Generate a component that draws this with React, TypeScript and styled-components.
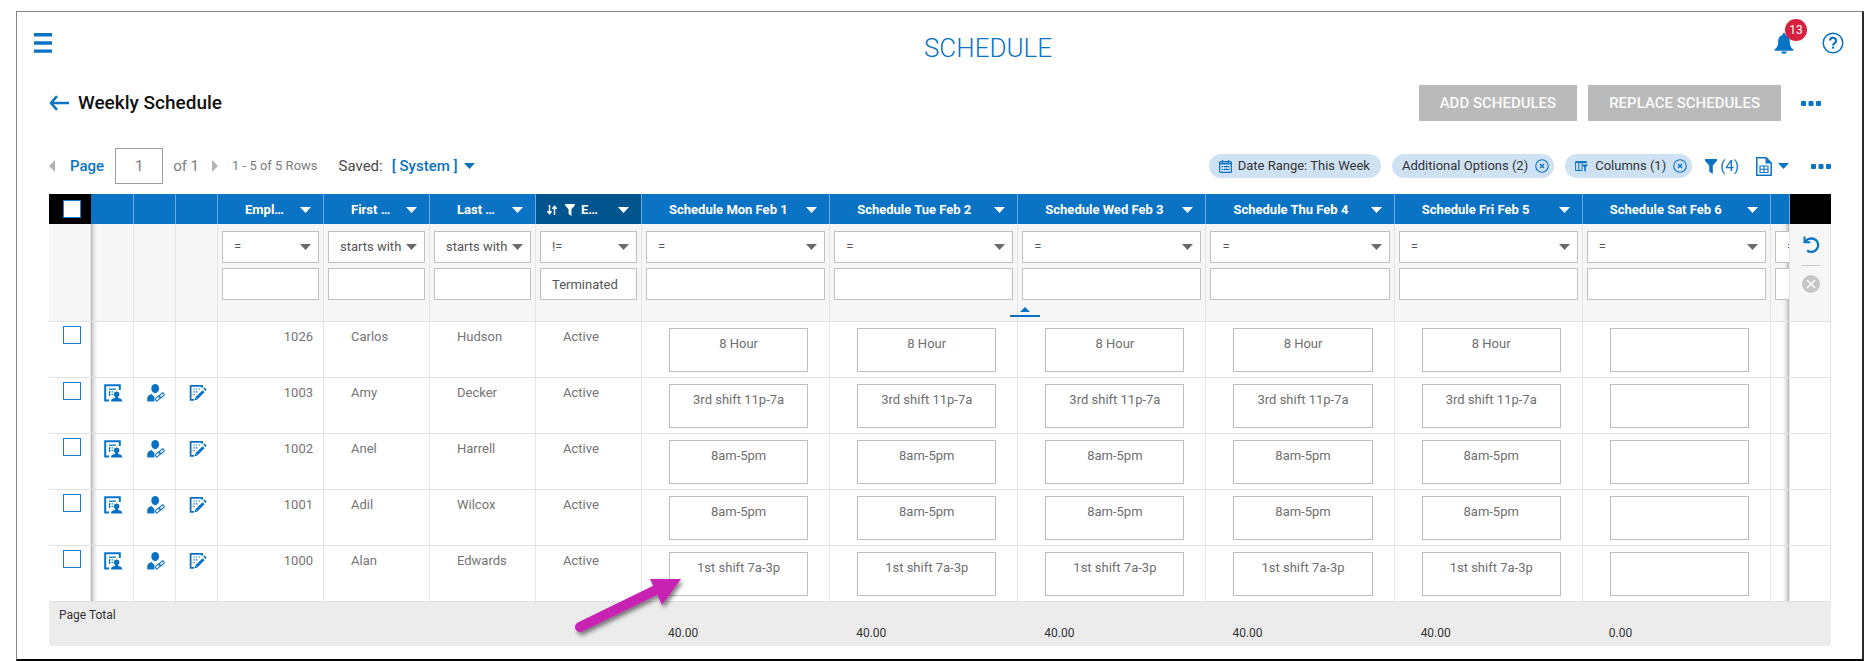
import React from "react";
import styled, { createGlobalStyle, css } from "styled-components";

const BLUE = "#0a73c4";

const GlobalStyle = createGlobalStyle`
  *, *::before, *::after { box-sizing: border-box; }
  body {
    margin: 0;
    background: #fff;
    color: #333;
    font-family: Roboto, "Liberation Sans", sans-serif;
    font-size: 13px;
    line-height: 16px;
  }
  button, input, select { font: inherit; color: inherit; }
  svg { display: block; flex: none; }
`;

const Frame = styled.div`
  margin: 11px 0 0 16px;
  min-height: calc(100vh - 11px);
  border-style: solid;
  border-width: 1px 2px 2px 1px;
  border-color: #868686 #2b2b2b #000 #868686;
`;

const IconButton = styled.button`
  display: flex;
  align-items: center;
  padding: 0;
  border: 0;
  background: none;
  color: ${BLUE};
  cursor: pointer;
`;

/* ---------- top bar ---------- */

const TopBar = styled.header`
  display: grid;
  grid-template-columns: auto 1fr auto;
  align-items: center;
  height: 62px;
  padding: 0 18px 0 17px;
`;

const AppTitle = styled.h1`
  margin: 0;
  padding: 10px 0 0 150px;
  color: ${BLUE};
  font-size: 26px;
  line-height: 32px;
  font-weight: 300;
  text-align: center;
`;

const TopActions = styled.div`
  display: flex;
  align-items: center;
  gap: 28px;
`;

const BellButton = styled(IconButton)`
  position: relative;
`;

const Badge = styled.span`
  position: absolute;
  left: 11px;
  top: -14px;
  width: 22px;
  height: 22px;
  border-radius: 50%;
  background: #d5213f;
  color: #fff;
  font-size: 12px;
  line-height: 22px;
  text-align: center;
`;

/* ---------- page heading ---------- */

const Content = styled.main`
  padding: 11px 31px 13px 32px;
`;

const HeadingRow = styled.div`
  display: flex;
  align-items: center;
  height: 36px;
  padding-right: 10px;
`;

const Heading = styled.h2`
  flex: 1;
  margin: 0 0 0 9px;
  color: #111;
  font-size: 19px;
  line-height: 24px;
  font-weight: 500;
`;

const ActionButton = styled.button`
  height: 36px;
  margin-right: 11px;
  padding: 0 21px;
  border: 0;
  background: #bababa;
  color: #fafafa;
  font-size: 15px;
  font-weight: 500;
  white-space: nowrap;
`;

const HeadingMore = styled(IconButton)`
  margin-left: 9px;
`;

/* ---------- toolbar ---------- */

const Toolbar = styled.div`
  display: flex;
  align-items: center;
  justify-content: space-between;
  height: 36px;
  margin: 27px 0 10px;
`;

const Pager = styled.div`
  display: flex;
  align-items: center;
  color: #7d7d7d;
  font-size: 15px;
  white-space: nowrap;
`;

const PageLabel = styled.label`
  margin: 0 11px 0 14px;
  color: ${BLUE};
  font-weight: 500;
`;

const PageInput = styled.input`
  width: 48px;
  height: 36px;
  margin-right: 10px;
  padding: 0;
  border: 1px solid #9b9b9b;
  background: #fff;
  text-align: center;
`;

const NextPage = styled(IconButton)`
  margin: 0 14px 0 12px;
`;

const RowCount = styled.span`
  font-size: 13px;
`;

const SavedLabel = styled.span`
  margin: 0 9px 0 21px;
  color: #4a4a4a;
`;

const SavedButton = styled(IconButton)`
  gap: 6px;
  font-weight: 500;
`;

const Tools = styled.div`
  display: flex;
  align-items: center;
  gap: 11px;
  white-space: nowrap;
`;

const Chip = styled.button<{ $closable?: boolean }>`
  display: flex;
  align-items: center;
  gap: ${(p) => (p.$closable ? 7 : 6)}px;
  height: 24px;
  padding: 0 ${(p) => (p.$closable ? 5 : 11)}px 0 10px;
  border: 0;
  border-radius: 12px;
  background: #cfe2f3;
  color: #333;

  svg { color: ${BLUE}; }
`;

const FilterCount = styled(IconButton)`
  gap: 3px;
  margin-left: 2px;
  font-size: 15px;
`;

const ExportButton = styled(IconButton)`
  gap: 6px;
  margin: 0 11px 0 6px;
`;

/* ---------- grid ---------- */

const GridWrap = styled.div`
  position: relative;
`;

const Grid = styled.table`
  width: 100%;
  table-layout: fixed;
  border-collapse: separate;
  border-spacing: 0;

  td, th { padding: 0; }
`;

const Col = styled.col<{ $w?: number }>`
  ${(p) => p.$w && css`width: ${p.$w}px;`}
`;

const HeadCell = styled.th<{ $tone?: "black" | "active" }>`
  height: 30px;
  overflow: hidden;
  border-right: 1px solid ${(p) => (p.$tone === "black" ? "#000" : "#6aabdf")};
  background: ${(p) =>
    p.$tone === "black" ? "#000" : p.$tone === "active" ? "#00558f" : BLUE};
  color: #fff;
  font-weight: 700;
  text-align: left;
`;

const HeadInner = styled.div<{ $icons?: boolean }>`
  display: flex;
  align-items: center;
  padding: 1px 12px 0 ${(p) => (p.$icons ? 11 : 27)}px;
`;

const HeadText = styled.span`
  flex: 1;
  white-space: nowrap;
`;

const HeadIcons = styled.span`
  display: flex;
  align-items: center;
  gap: 8px;
  margin-right: 6px;
`;

const shadowRight = css`
  background-image: linear-gradient(to right, #b4b4b4, #d9d9d9 2px, #efefef 4px, transparent 7px);
`;
const shadowLeft = css`
  background-image: linear-gradient(to left, #b4b4b4, #d9d9d9 2px, #efefef 4px, transparent 7px);
`;

const Cell = styled.td<{ $shade?: "left" | "right"; $align?: "center" | "right" }>`
  position: relative;
  height: 56px;
  border-right: 1px solid #e3e5e6;
  border-bottom: 1px solid #dfe2e4;
  background-color: #fff;
  color: #757575;
  vertical-align: top;
  text-align: ${(p) => p.$align ?? "left"};
  ${(p) => p.$shade === "right" && shadowRight}
  ${(p) => p.$shade === "left" && shadowLeft}
`;

const FilterCell = styled(Cell)`
  height: 98px;
  overflow: hidden;
  background-color: #f6f6f6;
`;

const TextCell = styled(Cell)`
  && { padding: 7px 10px 0 ${(p) => (p.$align === "right" ? 0 : 27)}px; }
`;

const FilterStack = styled.div`
  display: flex;
  flex-direction: column;
  gap: 5px;
  min-width: 97px;
  padding: 7px 4px 0 4px;
`;

const SelectWrap = styled.div<{ $fixed?: boolean }>`
  display: grid;
  align-items: center;
  width: ${(p) => (p.$fixed ? "180px" : "100%")};

  > * { grid-area: 1 / 1; }
  > svg {
    justify-self: end;
    margin-right: 8px;
    color: #6b6b6b;
    pointer-events: none;
  }
`;

const fieldStyle = css`
  width: 100%;
  height: 32px;
  border: 1px solid #c0c0c0;
  border-radius: 0;
  background: #fff;
  color: #555;
  outline: none;
`;

const OperatorSelect = styled.select`
  ${fieldStyle}
  appearance: none;
  padding: 0 11px;
`;

const FilterInput = styled.input`
  ${fieldStyle}
  padding: 0 11px;
`;

const Check = styled.input`
  appearance: none;
  display: block;
  width: 18px;
  height: 18px;
  margin: 0 0 0 14px;
  border: 1px solid #1b7ecb;
  background: #fff;
`;

const CheckCell = styled(Cell)`
  && { padding-top: 4px; }
`;

const RowAction = styled(IconButton)`
  margin: 6px 0 0 13px;
`;

const ShiftInput = styled.input`
  display: block;
  width: calc(100% - 48px);
  height: 44px;
  margin: 6px 0 0 27px;
  padding: 0 0 13px;
  border: 1px solid #bdbdbd;
  background: #fff;
  color: #6f6f6f;
  text-align: center;
`;

const ToolStack = styled.div`
  display: flex;
  flex-direction: column;
  align-items: center;
  padding: 12px 0 0 2px;
`;

const Rule = styled.span`
  width: 18px;
  height: 1px;
  margin: 11px 0 9px;
  background: #c8c8c8;
`;

const FootCell = styled.td<{ $total?: boolean }>`
  height: 44px;
  background: #ececec;
  color: #333;
  font-size: 12px;
  vertical-align: top;
  && { padding: ${(p) => (p.$total ? "23px 0 0 26px" : "5px 0 0 10px")}; }
`;

const CollapseHandle = styled(IconButton)`
  position: absolute;
  top: 113px;
  left: 169px;
  right: 0;
  width: 30px;
  margin: 0 auto;
  flex-direction: column;
  gap: 3px;

  &::after {
    content: "";
    width: 30px;
    height: 2px;
    background: ${BLUE};
  }
`;

const Pointer = styled.svg`
  position: absolute;
  left: -72px;
  top: 24px;
  z-index: 2;
  pointer-events: none;
`;

/* ---------- icons ---------- */

const Caret = ({ w = 11, h = 6 }: { w?: number; h?: number }) => (
  <svg width={w} height={h} viewBox="0 0 10 5" preserveAspectRatio="none" aria-hidden="true">
    <path d="M0 0h10L5 5z" fill="currentColor" />
  </svg>
);

const SideCaret = ({ dir }: { dir: "left" | "right" }) => (
  <svg width="7" height="12" viewBox="0 0 7 12" aria-hidden="true">
    <path d={dir === "left" ? "M6 0v12L0 6z" : "M1 0v12l6-6z"} fill="#b3b3b3" />
  </svg>
);

const Dots = () => (
  <svg width="20" height="5" viewBox="0 0 20 5" fill="currentColor" aria-hidden="true">
    <rect width="5" height="5" rx="1" />
    <rect x="7.5" width="5" height="5" rx="1" />
    <rect x="15" width="5" height="5" rx="1" />
  </svg>
);

const Menu = () => (
  <svg width="18" height="20" viewBox="0 0 18 20" fill="currentColor" aria-hidden="true">
    <path d="M0 0h18v3.4H0zM0 8.300h18v3.400H0zM0 16.400h18v3.400H0z" />
  </svg>
);

const Bell = () => (
  <svg width="20" height="21" viewBox="0 0 20 21" fill="currentColor" aria-hidden="true">
    <path d="M10 0c.9 0 1.500.6 1.500 1.500v.6c2.800.8 4.300 3 4.300 6.200 0 4.500 1 6.200 3.200 7.800.7.500.7 1.700-.2 1.700H1.200c-.9 0-.9-1.200-.2-1.700 2.200-1.600 3.200-3.300 3.200-7.800 0-3.200 1.500-5.400 4.300-6.200v-.6C8.500.6 9.100 0 10 0z" />
    <path d="M7.200 18.600h5.600a2.800 2.200 0 0 1-5.600 0z" />
  </svg>
);

const Help = () => (
  <svg width="22" height="22" viewBox="0 0 22 22" fill="none" stroke="currentColor" aria-hidden="true">
    <circle cx="11" cy="11" r="9.800" strokeWidth="1.500" />
    <path d="M8 8.600a3 3 0 1 1 4.600 2.500c-1 .7-1.500 1.100-1.500 2.300" strokeWidth="2.200" />
    <path d="M10 14.600h2.200v2H10z" fill="currentColor" stroke="none" />
  </svg>
);

const BackArrow = () => (
  <svg width="20" height="16" viewBox="0 0 20 16" fill="none" stroke="currentColor" strokeWidth="2.500" aria-hidden="true">
    <path d="M8 1.200 2 8l6 6.800M2 8h18" />
  </svg>
);

const Calendar = () => (
  <svg width="13" height="13" viewBox="0 0 13 13" fill="none" stroke="currentColor" aria-hidden="true">
    <rect x=".6" y="1.600" width="11.800" height="10.800" rx="1" strokeWidth="1.200" />
    <path d="M.6 3.600h11.800" strokeWidth="1.600" />
    <path d="M3.500 0v2.500M9.500 0v2.500M2.600 6.600h1.400M5 6.600h5.400M2.600 9.400h1.400M5 9.400h5.400" strokeWidth="1.200" />
  </svg>
);

const ColumnsIcon = () => (
  <svg width="13" height="13" viewBox="0 0 13 13" fill="none" stroke="currentColor" aria-hidden="true">
    <path d="M7 10.500H.6V1.600h10.800v1.600M.6 2.500h10.800M3.800 2v8.500M7 2v8.500" strokeWidth="1" />
    <path d="M6.800 4.500H13l-2.200 2.800V12l-1.600-1.200V7.300z" fill="currentColor" stroke="none" />
  </svg>
);

const CircleX = () => (
  <svg width="14" height="14" viewBox="0 0 15 15" fill="none" stroke="currentColor" aria-hidden="true">
    <circle cx="7.500" cy="7.500" r="6.700" strokeWidth="1.200" />
    <path d="m5.300 5.300 4.400 4.400M9.700 5.300 5.300 9.700" strokeWidth="1.500" />
  </svg>
);

const Funnel = ({ w = 12, h = 15 }: { w?: number; h?: number }) => (
  <svg width={w} height={h} viewBox="0 0 12 15" fill="currentColor" aria-hidden="true">
    <path d="M0 0h12v1.800L7.800 6.500V15L4.200 12.500v-6L0 1.800z" />
  </svg>
);

const SortArrows = () => (
  <svg width="10" height="10" viewBox="0 0 10 10" fill="none" stroke="currentColor" strokeWidth="1.500" aria-hidden="true">
    <path d="M2.500 0v8.500M.4 6.200l2.100 2.400 2.100-2.400M7.500 10V1.500M5.400 3.800l2.100-2.400 2.100 2.400" />
  </svg>
);

const SheetIcon = () => (
  <svg width="16" height="19" viewBox="0 0 16 19" fill="none" stroke="currentColor" aria-hidden="true">
    <path d="M.8.800h9.400l5 5.200v12.200H.8z" strokeWidth="1.500" />
    <path d="M9.500.5v6H15.500z" fill="currentColor" stroke="none" />
    <path d="M4 9h8v6.500H4zM4 12.200h8M8 9v6.500" strokeWidth="1.100" />
  </svg>
);

const Undo = () => (
  <svg width="17" height="18" viewBox="0 0 17 18" fill="none" stroke={BLUE} strokeWidth="2.200" aria-hidden="true">
    <path d="M2 5.500C4 3 6 2.300 8.700 2.300a6.800 6.800 0 1 1-4.500 12.200" />
    <path d="M1.500.5v5.800h5.800" strokeWidth="2" />
  </svg>
);

const ClearIcon = () => (
  <svg width="18" height="18" viewBox="0 0 18 18" fill="none" aria-hidden="true">
    <circle cx="9" cy="9" r="9" fill="#c6c6c6" />
    <path d="m5 5 8 8M13 5l-8 8" stroke="#fff" strokeWidth="1.500" />
  </svg>
);

const ProfileIcon = () => (
  <svg width="18" height="18" viewBox="0 0 18 18" fill="none" stroke="currentColor" aria-hidden="true">
    <path d="M5 16.600H1.200V1.200h14.600V6" strokeWidth="2" />
    <path d="M5 5.200h7" strokeWidth="1.300" />
    <path d="M5.600 7v5M7.500 7.800h1.600M7.500 10.500h1.600" strokeWidth="1.200" />
    <g fill="currentColor" stroke="none">
      <path d="M12.600 7.500c1.700 0 2.800 1.100 2.800 2.700 0 1.100-.5 2-1.200 2.600v1.100c2 .5 3.600.9 3.800 2.200v1.500H7.200v-1.500c.2-1.300 1.800-1.700 3.800-2.200v-1.100c-.7-.6-1.200-1.500-1.200-2.600 0-1.600 1.100-2.700 2.800-2.700z" />
    </g>
  </svg>
);

const PersonLink = () => (
  <svg width="18" height="18" viewBox="0 0 18 18" fill="none" aria-hidden="true">
    <ellipse cx="8.200" cy="4.600" rx="3.900" ry="4.600" fill="currentColor" />
    <path d="M.3 17.500v-3.300c0-2 1.500-3.400 4.200-4.200l3 3-.2 4.500z" fill="currentColor" />
    <g stroke="currentColor" strokeWidth="1.100">
      <rect x="8.100" y="13" width="5.600" height="2.800" rx="1.400" transform="rotate(-45 10.900 14.400)" />
      <rect x="11.900" y="10" width="5.600" height="2.800" rx="1.400" transform="rotate(-45 14.700 11.400)" />
    </g>
  </svg>
);

const EditSheet = () => (
  <svg width="18" height="18" viewBox="0 0 18 18" fill="none" stroke="currentColor" aria-hidden="true">
    <path d="M5 15.800H1.600V1.800h11.500v2" strokeWidth="1.800" />
    <path d="M4.300 5h1.400M7 5h1.400M9.700 5h1.400M4.300 7.800h1.400M7 7.800h1.400M4.300 10.500h1.400" strokeWidth="1.200" />
    <path d="m7.500 14.300 7-7" strokeWidth="3" />
    <path d="m15.500 3.500 2.300 2.300-1.300 1.300-2.300-2.300zM5.600 16.300l.6-3 2.400 2.400z" fill="currentColor" stroke="none" />
  </svg>
);

/* ---------- data ---------- */

const days = ["Mon Feb 1", "Tue Feb 2", "Wed Feb 3", "Thu Feb 4", "Fri Feb 5", "Sat Feb 6"];
const totals = ["40.00", "40.00", "40.00", "40.00", "40.00", "0.00"];

const employees = [
  { id: "1026", first: "Carlos", last: "Hudson", shift: "8 Hour", actions: false },
  { id: "1003", first: "Amy", last: "Decker", shift: "3rd shift 11p-7a", actions: true },
  { id: "1002", first: "Anel", last: "Harrell", shift: "8am-5pm", actions: true },
  { id: "1001", first: "Adil", last: "Wilcox", shift: "8am-5pm", actions: true },
  { id: "1000", first: "Alan", last: "Edwards", shift: "1st shift 7a-3p", actions: true },
];

const rowActions = [
  { label: "Employee profile", Icon: ProfileIcon },
  { label: "Linked accounts", Icon: PersonLink },
  { label: "Edit timesheet", Icon: EditSheet },
];

const Filter = ({ name, op, value = "", fixed }: { name: string; op: string; value?: string; fixed?: boolean }) => (
  <FilterStack>
    <SelectWrap $fixed={fixed}>
      <OperatorSelect aria-label={`${name} operator`} defaultValue={op}>
        <option>{op}</option>
      </OperatorSelect>
      <Caret w={11} />
    </SelectWrap>
    <SelectWrap $fixed={fixed}>
      <FilterInput aria-label={`${name} filter`} defaultValue={value} />
    </SelectWrap>
  </FilterStack>
);

const HeadLabel = ({ children }: { children: React.ReactNode }) => (
  <HeadInner>
    <HeadText>{children}</HeadText>
    <Caret />
  </HeadInner>
);

export default function App() {
  return (
    <>
      <GlobalStyle />
      <Frame>
        <TopBar>
          <IconButton aria-label="Menu"><Menu /></IconButton>
          <AppTitle>SCHEDULE</AppTitle>
          <TopActions>
            <BellButton aria-label="Notifications">
              <Bell />
              <Badge>13</Badge>
            </BellButton>
            <IconButton aria-label="Help"><Help /></IconButton>
          </TopActions>
        </TopBar>

        <Content>
          <HeadingRow>
            <IconButton aria-label="Back"><BackArrow /></IconButton>
            <Heading>Weekly Schedule</Heading>
            <ActionButton>ADD SCHEDULES</ActionButton>
            <ActionButton>REPLACE SCHEDULES</ActionButton>
            <HeadingMore aria-label="More actions"><Dots /></HeadingMore>
          </HeadingRow>

          <Toolbar>
            <Pager>
              <IconButton aria-label="Previous page"><SideCaret dir="left" /></IconButton>
              <PageLabel htmlFor="page">Page</PageLabel>
              <PageInput id="page" defaultValue="1" />
              <span>of 1</span>
              <NextPage aria-label="Next page"><SideCaret dir="right" /></NextPage>
              <RowCount>1 - 5 of 5 Rows</RowCount>
              <SavedLabel>Saved:</SavedLabel>
              <SavedButton>[ System ]<Caret /></SavedButton>
            </Pager>
            <Tools>
              <Chip><Calendar />Date Range: This Week</Chip>
              <Chip $closable>Additional Options (2)<CircleX /></Chip>
              <Chip $closable><ColumnsIcon />Columns (1)<CircleX /></Chip>
              <FilterCount aria-label="Filters"><Funnel />(4)</FilterCount>
              <ExportButton aria-label="Export"><SheetIcon /><Caret /></ExportButton>
              <IconButton aria-label="More options"><Dots /></IconButton>
            </Tools>
          </Toolbar>

          <GridWrap>
            <Grid>
              <colgroup>
                <Col $w={42} /><Col $w={43} /><Col $w={42} /><Col $w={42} />
                <Col $w={106} /><Col $w={106} /><Col $w={106} /><Col $w={106} />
                {days.map((d) => <Col key={d} />)}
                <Col $w={19} /><Col $w={41} />
              </colgroup>
              <thead>
                <tr>
                  <HeadCell $tone="black"><Check type="checkbox" aria-label="Select all" /></HeadCell>
                  <HeadCell /><HeadCell /><HeadCell />
                  <HeadCell><HeadLabel>Empl…</HeadLabel></HeadCell>
                  <HeadCell><HeadLabel>First …</HeadLabel></HeadCell>
                  <HeadCell><HeadLabel>Last …</HeadLabel></HeadCell>
                  <HeadCell $tone="active">
                    <HeadInner $icons>
                      <HeadIcons><SortArrows /><Funnel w={10} h={12} /></HeadIcons>
                      <HeadText>E…</HeadText>
                      <Caret />
                    </HeadInner>
                  </HeadCell>
                  {days.map((d) => (
                    <HeadCell key={d}><HeadLabel>Schedule {d}</HeadLabel></HeadCell>
                  ))}
                  <HeadCell />
                  <HeadCell $tone="black" />
                </tr>
              </thead>
              <tbody>
                <tr>
                  <FilterCell />
                  <FilterCell $shade="right" /><FilterCell /><FilterCell />
                  <FilterCell><Filter name="Employee id" op="=" /></FilterCell>
                  <FilterCell><Filter name="First name" op="starts with" /></FilterCell>
                  <FilterCell><Filter name="Last name" op="starts with" /></FilterCell>
                  <FilterCell><Filter name="Status" op="!=" value="Terminated" /></FilterCell>
                  {days.map((d) => (
                    <FilterCell key={d}><Filter name={d} op="=" /></FilterCell>
                  ))}
                  <FilterCell $shade="left"><Filter name="Next day" op="=" fixed /></FilterCell>
                  <FilterCell>
                    <ToolStack>
                      <IconButton aria-label="Reset filters"><Undo /></IconButton>
                      <Rule />
                      <IconButton aria-label="Clear filters"><ClearIcon /></IconButton>
                    </ToolStack>
                  </FilterCell>
                </tr>
                {employees.map((e, row) => (
                  <tr key={e.id}>
                    <CheckCell><Check type="checkbox" aria-label={`Select ${e.first} ${e.last}`} /></CheckCell>
                    {rowActions.map(({ label, Icon }, i) => (
                      <Cell key={label} $shade={i === 0 ? "right" : undefined}>
                        {e.actions && <RowAction aria-label={label}><Icon /></RowAction>}
                      </Cell>
                    ))}
                    <TextCell $align="right">{e.id}</TextCell>
                    <TextCell>{e.first}</TextCell>
                    <TextCell>{e.last}</TextCell>
                    <TextCell>Active</TextCell>
                    {days.map((d, i) => (
                      <Cell key={d}>
                        <ShiftInput
                          aria-label={`${e.first} ${e.last} ${d}`}
                          defaultValue={i < 5 ? e.shift : ""}
                        />
                        {row === 4 && i === 0 && (
                          <Pointer width="130" height="80" viewBox="0 0 130 80" aria-hidden="true">
                            <defs>
                              <filter id="pointer-shadow" x="-20%" y="-20%" width="150%" height="150%">
                                <feDropShadow dx="2" dy="3" stdDeviation="2" floodColor="#000" floodOpacity="0.5" />
                              </filter>
                            </defs>
                            <g filter="url(#pointer-shadow)" fill="#c724b1">
                              <path d="M10 57 88 19" stroke="#c724b1" strokeWidth="10" strokeLinecap="round" />
                              <path d="M80 9h31L92 35z" />
                            </g>
                          </Pointer>
                        )}
                      </Cell>
                    ))}
                    <Cell $shade="left" />
                    <Cell />
                  </tr>
                ))}
              </tbody>
              <tfoot>
                <tr>
                  <FootCell colSpan={8}>Page Total</FootCell>
                  {totals.map((t, i) => <FootCell key={days[i]} $total>{t}</FootCell>)}
                  <FootCell colSpan={2} />
                </tr>
              </tfoot>
            </Grid>
            <CollapseHandle aria-label="Collapse filters">
              <svg width="10" height="5" viewBox="0 0 10 5" aria-hidden="true">
                <path d="M5 0l5 5H0z" fill="currentColor" />
              </svg>
            </CollapseHandle>
          </GridWrap>
        </Content>
      </Frame>
    </>
  );
}
